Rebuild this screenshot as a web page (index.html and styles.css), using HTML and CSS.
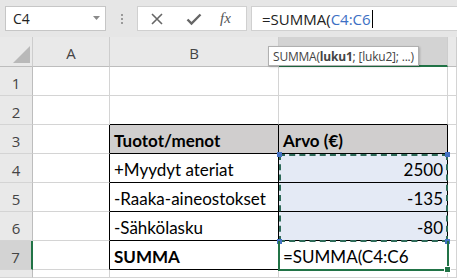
FILE: index.html
```html
<!DOCTYPE html>
<html lang="fi">
<head>
    <meta charset="UTF-8">
    <title>SUMMA</title>
    <link rel="stylesheet" href="styles.css">
</head>
<body>
    <div class="toolbar">
        <div class="name-box">
            <span>C4</span>
            <svg class="drop" width="7" height="4" viewBox="0 0 7 4"><polygon points="0,0 7,0 3.5,4" fill="#8a8a8a"/></svg>
        </div>
        <div class="grip"><i></i><i></i><i></i></div>
        <div class="fx-box">
            <svg width="14" height="14" viewBox="0 0 14 14"><path d="M2 2 L12 12 M12 2 L2 12" stroke="#666" stroke-width="1.6"/></svg>
            <svg width="16" height="14" viewBox="0 0 16 14"><path d="M1.5 7.5 L5.5 11.5 L14.5 2.5" stroke="#666" stroke-width="2.4" fill="none"/></svg>
            <span class="fx">fx</span>
        </div>
        <div class="formula">=SUMMA(<span class="ref">C4:C6</span><span class="caret"></span></div>
    </div>

    <div class="sheet">
        <!-- header row -->
        <div class="hd corner"><svg width="17" height="17" viewBox="0 0 17 17"><polygon points="17,0 17,17 0,17" fill="#b9b9b9"/></svg></div>
        <div class="hd">A</div>
        <div class="hd">B</div>
        <div class="hd sel-col">C</div>
        <div class="hd"></div>

        <!-- row 1 -->
        <div class="rh">1</div><div class="c"></div><div class="c"></div><div class="c"></div><div class="c"></div>
        <!-- row 2 -->
        <div class="rh">2</div><div class="c"></div><div class="c top"></div><div class="c top"></div><div class="c"></div>
        <!-- row 3 -->
        <div class="rh">3</div><div class="c lft"></div>
        <div class="c tb head">Tuotot/menot</div>
        <div class="c tb head">Arvo (€)</div>
        <div class="c"></div>
        <!-- row 4 -->
        <div class="rh">4</div><div class="c lft"></div>
        <div class="c tb">+Myydyt ateriat</div>
        <div class="c tb num range">2500</div>
        <div class="c"></div>
        <!-- row 5 -->
        <div class="rh">5</div><div class="c lft"></div>
        <div class="c tb">-Raaka-aineostokset</div>
        <div class="c tb num range">-135</div>
        <div class="c"></div>
        <!-- row 6 -->
        <div class="rh">6</div><div class="c lft"></div>
        <div class="c tb">-Sähkölasku</div>
        <div class="c tb num range">-80</div>
        <div class="c"></div>
        <!-- row 7 -->
        <div class="rh sel-row">7</div><div class="c lft"></div>
        <div class="c tb bold">SUMMA</div>
        <div class="c tb">=SUMMA(C4:C6</div>
        <div class="c"></div>
        <!-- row 8 -->
        <div class="rh"></div><div class="c"></div><div class="c"></div><div class="c"></div><div class="c"></div>

        <!-- overlays -->
        <div class="ants">
            <i class="h tl"></i><i class="h tr"></i><i class="h bl"></i><i class="h br"></i>
        </div>
        <div class="active"><i class="fill"></i></div>
        <div class="tip">SUMMA(<b>luku1</b>; [luku2]; ...)</div>
    </div>
</body>
</html>
```

FILE: styles.css
```css
body {
    margin: 0;
    background-color: #e6e6e6;
    font-family: "Open Sans", "Noto Sans", sans-serif;
    overflow: hidden;
}
.toolbar {
    display: flex;
    align-items: center;
    height: 37px;
    padding: 4px 0 4px 5px;
    box-sizing: border-box;
}
.name-box {
    display: flex;
    align-items: center;
    justify-content: space-between;
    width: 101px;
    height: 25px;
    box-sizing: border-box;
    background-color: white;
    border: 1px solid #c6c6c6;
    padding: 0 5px 0 7px;
    font-size: 14px;
    color: #222;
}
.drop {
    margin-bottom: 2px;
}
.grip {
    display: flex;
    flex-direction: column;
    gap: 2px;
    margin: 0 14px 0 15px;
}
.grip i {
    width: 2px;
    height: 2px;
    background-color: #9a9a9a;
}
.fx-box {
    display: flex;
    align-items: center;
    width: 110px;
    height: 25px;
    box-sizing: border-box;
    background-color: white;
    border: 1px solid #d0d0d0;
    padding-left: 12px;
    gap: 22px;
}
.fx {
    font-family: "Liberation Serif", serif;
    font-style: italic;
    font-size: 15px;
    color: #555;
    margin-left: -4px;
}
.formula {
    flex: 1;
    display: flex;
    align-items: center;
    height: 25px;
    box-sizing: border-box;
    margin-left: 4px;
    background-color: white;
    border: 1px solid #d0d0d0;
    border-right: none;
    padding-left: 10px;
    font-size: 15px;
    color: #222;
}
.ref {
    color: #3d6fc4;
}
.caret {
    width: 1px;
    height: 18px;
    background-color: #000;
    margin-left: 1px;
}
.sheet {
    position: relative;
    display: grid;
    grid-template-columns: 33px 77px 169px 169px 1fr;
    grid-template-rows: 30px repeat(7, 29px) 8px;
    background-color: white;
    font-family: Lato, "Liberation Sans", sans-serif;
    font-size: 17px;
    color: #000;
}
.hd {
    display: flex;
    align-items: center;
    justify-content: center;
    background-color: #e9e9e9;
    border-right: 1px solid #cdcdcd;
    border-bottom: 1px solid #bdbdbd;
    font-family: "Open Sans", "Noto Sans", sans-serif;
    font-size: 15px;
    color: #444;
    padding-top: 2px;
    box-sizing: border-box;
}
.corner {
    justify-content: flex-end;
    align-items: flex-end;
    padding: 0 2px 3px 0;
}
.sel-col {
    background-color: #d3d3d3;
    border-bottom: 2px solid #217346;
}
.rh {
    display: flex;
    align-items: flex-end;
    justify-content: center;
    padding-bottom: 2px;
    background-color: #e9e9e9;
    border-right: 1px solid #bdbdbd;
    border-bottom: 1px solid #d4d4d4;
    font-family: "Open Sans", "Noto Sans", sans-serif;
    font-size: 15px;
    color: #444;
    box-sizing: border-box;
}
.sel-row {
    background-color: #d3d3d3;
    border-right: 2px solid #217346;
}
.c {
    display: flex;
    align-items: flex-end;
    padding: 0 4px 2px 4px;
    border-right: 1px solid #d4d4d4;
    border-bottom: 1px solid #d4d4d4;
    box-sizing: border-box;
    white-space: nowrap;
    overflow: hidden;
}
.c.top {
    border-bottom-color: #000;
}
.c.lft {
    border-right-color: #000;
}
.c.tb {
    border-right-color: #000;
    border-bottom-color: #000;
}
.head {
    background-color: #d0cece;
    font-weight: bold;
}
.bold {
    font-weight: bold;
}
.num {
    justify-content: flex-end;
}
.range {
    background-color: #e4eaf5;
}
.ants {
    position: absolute;
    left: 279px;
    top: 117px;
    width: 169px;
    height: 88px;
    box-sizing: border-box;
    border: 2px dashed #2e6b59;
}
.ants .h {
    position: absolute;
    width: 5px;
    height: 5px;
    background-color: #4472c4;
}
.ants .tl { left: -4px; top: -4px; }
.ants .tr { right: -4px; top: -4px; }
.ants .bl { left: -4px; bottom: -4px; }
.ants .br { right: -4px; bottom: -4px; }
.active {
    position: absolute;
    left: 278px;
    top: 204px;
    width: 171px;
    height: 30px;
    box-sizing: border-box;
    border: 2px solid #217346;
    border-top: none;
}
.active .fill {
    position: absolute;
    right: -4px;
    bottom: -4px;
    width: 5px;
    height: 5px;
    background-color: #217346;
    border: 1px solid white;
}
.tip {
    position: absolute;
    left: 268px;
    top: 9px;
    height: 18px;
    padding: 0 4px;
    display: flex;
    align-items: center;
    background-color: white;
    border: 1px solid #b0b0b0;
    box-shadow: 1px 1px 2px rgba(0, 0, 0, 0.2);
    font-family: "Open Sans", "Noto Sans", sans-serif;
    font-size: 12px;
    letter-spacing: -0.2px;
    color: #444;
    white-space: nowrap;
}
```
